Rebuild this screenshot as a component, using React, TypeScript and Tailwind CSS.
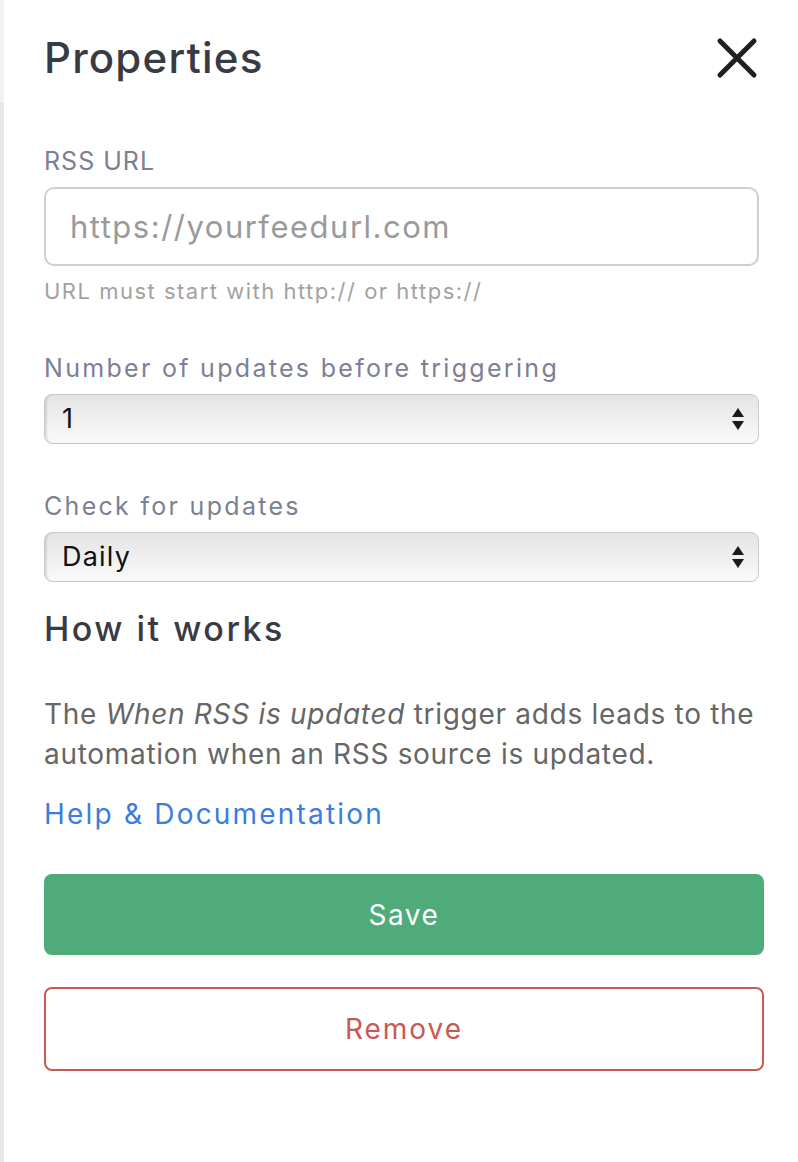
import React from "react";

const font = { fontFamily: "Inter, 'Open Sans', sans-serif" };

const SelectArrows: React.FC = () => (
  <svg width="14" height="26" viewBox="0 0 14 26" className="pointer-events-none absolute right-[14px] top-1/2 -translate-y-1/2">
    <path d="M7 2 L13 11 H1 Z" fill="#1a1a1a" />
    <path d="M7 24 L13 15 H1 Z" fill="#1a1a1a" />
  </svg>
);

const SelectField: React.FC<{ label: string; value: string; options: string[]; last?: boolean }> = ({ label, value, options, last }) => (
  <div className={last ? "mb-[25px]" : "mb-[46px]"}>
    <label className="block text-[25px] leading-[32px] tracking-[2.3px] text-[#7d7f93] mb-[10px]">{label}</label>
    <div className="relative w-[715px]">
      <select
        defaultValue={value}
        className="w-full h-[50px] appearance-none rounded-[8px] border-[1.5px] border-[#c9c9c9] bg-gradient-to-b from-[#e4e4e4] via-[#efefef] to-[#fafafa] pl-[17px] text-[27px] tracking-[1.2px] text-[#111] shadow-[inset_3px_0_3px_-2px_rgba(0,0,0,0.18)] outline-none"
        style={font}
      >
        {options.map((o) => (
          <option key={o}>{o}</option>
        ))}
      </select>
      <SelectArrows />
    </div>
  </div>
);

const App: React.FC = () => {
  return (
    <div className="flex w-[798px] min-h-[1162px] bg-white" style={font}>
      {/* left edge of the canvas */}
      <div className="flex flex-col w-[4px] shrink-0">
        <div className="h-[103px] bg-[#f1f1f5]" />
        <div className="flex-1 bg-[#e6e6ea]" />
      </div>

      <div className="flex-1 pl-[40px] pr-[34px]">
        {/* Header */}
        <div className="flex items-center justify-between pt-[33px] pb-[62px]">
          <h1 className="text-[42px] leading-[50px] font-medium tracking-[1.2px] text-[#383b43]">Properties</h1>
          <button className="mr-[6px]" aria-label="Close">
            <svg width="42" height="42" viewBox="0 0 42 42">
              <path d="M4 4 L38 38 M38 4 L4 38" stroke="#1f1f1f" strokeWidth="5" strokeLinecap="round" />
            </svg>
          </button>
        </div>

        {/* RSS URL */}
        <div className="mb-[46px]">
          <label className="block text-[25px] leading-[32px] tracking-[1px] text-[#7d7f93] mb-[10px]">RSS URL</label>
          <input
            placeholder="https://yourfeedurl.com"
            className="w-[715px] h-[79px] rounded-[10px] border-2 border-[#cfcfcf] px-[24px] text-[31px] tracking-[1.5px] text-[#333] placeholder:text-[#9a9a9a] outline-none"
            style={font}
          />
          <p className="mt-[10px] text-[22px] leading-[30px] tracking-[1.5px] text-[#a2a2a2]">URL must start with http:// or https://</p>
        </div>

        <SelectField label="Number of updates before triggering" value="1" options={["1", "2", "3", "5", "10"]} />
        <SelectField label="Check for updates" value="Daily" options={["Hourly", "Daily", "Weekly"]} last />

        {/* How it works */}
        <h2 className="text-[34px] leading-[44px] font-medium tracking-[2.5px] text-[#383b43] mb-[43px]">How it works</h2>
        <p className="text-[28px] leading-[40px] tracking-[0.7px] text-[#666666]">
          The <em>When RSS is updated</em> trigger adds leads to the automation when an RSS source is updated.
        </p>
        <a href="#" className="block mt-[20px] text-[28px] leading-[40px] tracking-[2.2px] text-[#3b7ddd]">
          Help &amp; Documentation
        </a>

        {/* Actions */}
        <div className="flex flex-col gap-[32px] mt-[40px]">
          <button className="h-[81px] w-full rounded-[8px] bg-[#4fab7a] text-[28px] tracking-[1.5px] text-white">Save</button>
          <button className="h-[84px] w-full rounded-[8px] border-2 border-[#c75a52] bg-white text-[28px] tracking-[2px] text-[#c75a52]">
            Remove
          </button>
        </div>
      </div>
    </div>
  );
};

export default App;
